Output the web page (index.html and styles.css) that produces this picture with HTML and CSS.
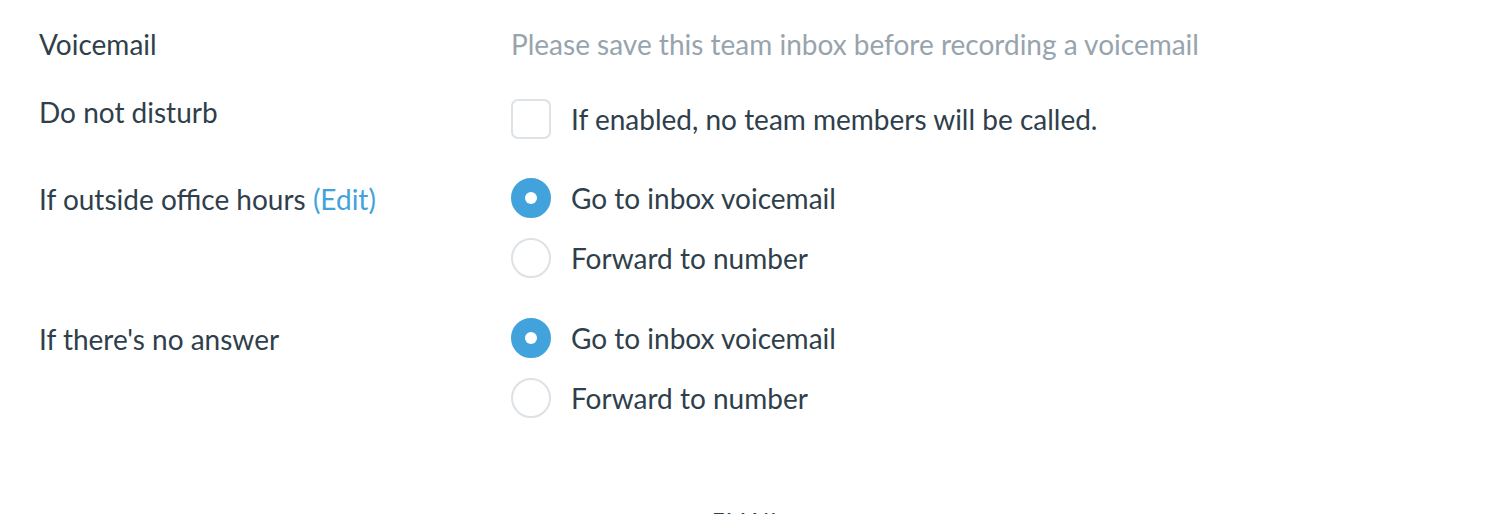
FILE: index.html
```html
<!DOCTYPE html>
<html>
<head>
<meta charset="utf-8">
<link rel="stylesheet" href="styles.css">
</head>
<body>
<div class="settings">
  <div class="row row-voicemail">
    <div class="label">Voicemail</div>
    <div class="value muted">Please save this team inbox before recording a voicemail</div>
  </div>
  <div class="row row-dnd">
    <div class="label">Do not disturb</div>
    <div class="value">
      <label class="option option-check"><span class="checkbox"></span><span>If enabled, no team members will be called.</span></label>
    </div>
  </div>
  <div class="row row-radio">
    <div class="label">If outside office hours <a class="edit">(Edit)</a></div>
    <div class="value options">
      <label class="option"><span class="radio checked"></span><span>Go to inbox voicemail</span></label>
      <label class="option"><span class="radio"></span><span>Forward to number</span></label>
    </div>
  </div>
  <div class="row row-radio">
    <div class="label">If there's no answer</div>
    <div class="value options">
      <label class="option"><span class="radio checked"></span><span>Go to inbox voicemail</span></label>
      <label class="option"><span class="radio"></span><span>Forward to number</span></label>
    </div>
  </div>
  <div class="section-title">EMAIL</div>
</div>
</body>
</html>
```
FILE: styles.css
```css
html, body {
  margin: 0;
  padding: 0;
  background: #ffffff;
}
body {
  font-family: "Lato", "Open Sans", sans-serif;
  font-size: 28px;
  color: #2f3f4b;
  overflow: hidden;
  height: 514px;
}
.settings {
  padding: 24px 0 0 39px;
}
.row {
  display: grid;
  grid-template-columns: 472px 1fr;
  align-items: start;
}
.label, .value {
  line-height: 40px;
}
.muted {
  color: #97a4ae;
}
.row-dnd {
  margin-top: 28px;
}
.row-dnd .value {
  padding-top: 7px;
}
.row-radio {
  margin-top: 39px;
}
.row-radio + .row-radio {
  margin-top: 40px;
}
.row-radio .label {
  padding-top: 1px;
}
.options {
  display: flex;
  flex-direction: column;
  gap: 20px;
}
.option {
  display: flex;
  align-items: center;
  gap: 20px;
}
.checkbox {
  width: 36px;
  height: 36px;
  border: 2px solid #dde2e6;
  border-radius: 7px;
  flex: none;
}
.radio {
  width: 36px;
  height: 36px;
  border: 2px solid #dde2e6;
  border-radius: 50%;
  flex: none;
  display: flex;
  align-items: center;
  justify-content: center;
}
.radio.checked {
  background: #42a3dc;
  border-color: #42a3dc;
}
.radio.checked::after {
  content: "";
  width: 12px;
  height: 12px;
  background: #ffffff;
  border-radius: 50%;
}
.edit {
  color: #42a3dc;
}
.section-title {
  margin-top: 92px;
  padding-left: 673px;
  font-size: 22px;
  letter-spacing: 1px;
  color: #2f3f4b;
  line-height: 20px;
}
```
